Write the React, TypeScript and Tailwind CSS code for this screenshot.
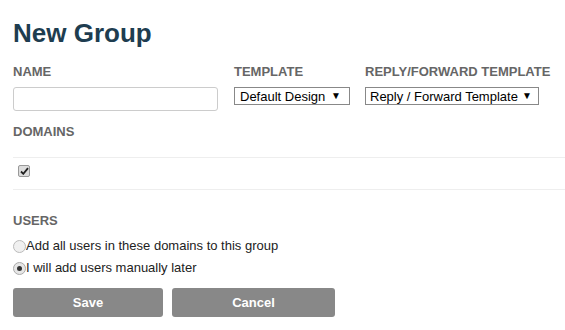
export default function App() {
  return (
    <div className="w-[565px] h-[330px] bg-white px-[13px] pt-[17px] overflow-hidden" style={{ fontFamily: '"Liberation Sans", Arial, sans-serif' }}>
      <h1 className="text-[26px] font-bold leading-[32px] text-[#1e3d50]">New Group</h1>

      <div className="flex mt-[15px]">
        <div className="w-[221px]">
          <div className="text-[13px] font-bold text-[#666] leading-[15px]">NAME</div>
          <div className="mt-[8px] w-[205px] h-[24px] border border-[#ccc] rounded-[3px]" />
        </div>
        <div className="w-[131px]">
          <div className="text-[13px] font-bold text-[#666] leading-[15px]">TEMPLATE</div>
          <div className="mt-[8px] w-[116px] h-[18px] border border-[#888] flex items-center justify-between pl-[5px] pr-[8px] text-[13px] text-black leading-none">
            <span>Default Design</span>
            <span className="text-[10px]">▼</span>
          </div>
        </div>
        <div>
          <div className="text-[13px] font-bold text-[#666] leading-[15px]">REPLY/FORWARD TEMPLATE</div>
          <div className="mt-[8px] w-[174px] h-[18px] border border-[#888] flex items-center justify-between pl-[4px] pr-[6px] text-[13px] text-black leading-none">
            <span>Reply / Forward Template</span>
            <span className="text-[10px]">▼</span>
          </div>
        </div>
      </div>

      <div className="mt-[13px] text-[13px] font-bold text-[#666] leading-[15px]">DOMAINS</div>
      <div className="mt-[18px] -mr-[13px] border-t border-b border-[#eee] h-[33px] flex items-start pt-[7px] pl-[5px]">
        <span className="w-[12px] h-[12px] border border-[#999] bg-[#ddd] rounded-[2px] flex items-center justify-center">
          <svg width="9" height="8" viewBox="0 0 9 8"><path d="M1 4.5 L3.3 6.8 L8 1.2" fill="none" stroke="#222" strokeWidth="1.8" /></svg>
        </span>
      </div>

      <div className="mt-[23px] text-[13px] font-bold text-[#666] leading-[15px]">USERS</div>
      <div className="mt-[10px] flex flex-col gap-[6px] text-[13px] text-[#222] leading-[16px]">
        <label className="flex items-center">
          <span className="w-[13px] h-[13px] rounded-full border border-[#bbb] bg-[#f0f0f0]" />
          <span>Add all users in these domains to this group</span>
        </label>
        <label className="flex items-center">
          <span className="w-[13px] h-[13px] rounded-full border border-[#aaa] bg-[#e6e6e6] flex items-center justify-center">
            <span className="w-[5px] h-[5px] rounded-full bg-[#333]" />
          </span>
          <span>I will add users manually later</span>
        </label>
      </div>

      <div className="mt-[12px] flex gap-[9px]">
        <button className="w-[150px] h-[29px] rounded-[3px] bg-[#888] text-white font-bold text-[13px]">Save</button>
        <button className="w-[163px] h-[29px] rounded-[3px] bg-[#888] text-white font-bold text-[13px]">Cancel</button>
      </div>
    </div>
  );
}
